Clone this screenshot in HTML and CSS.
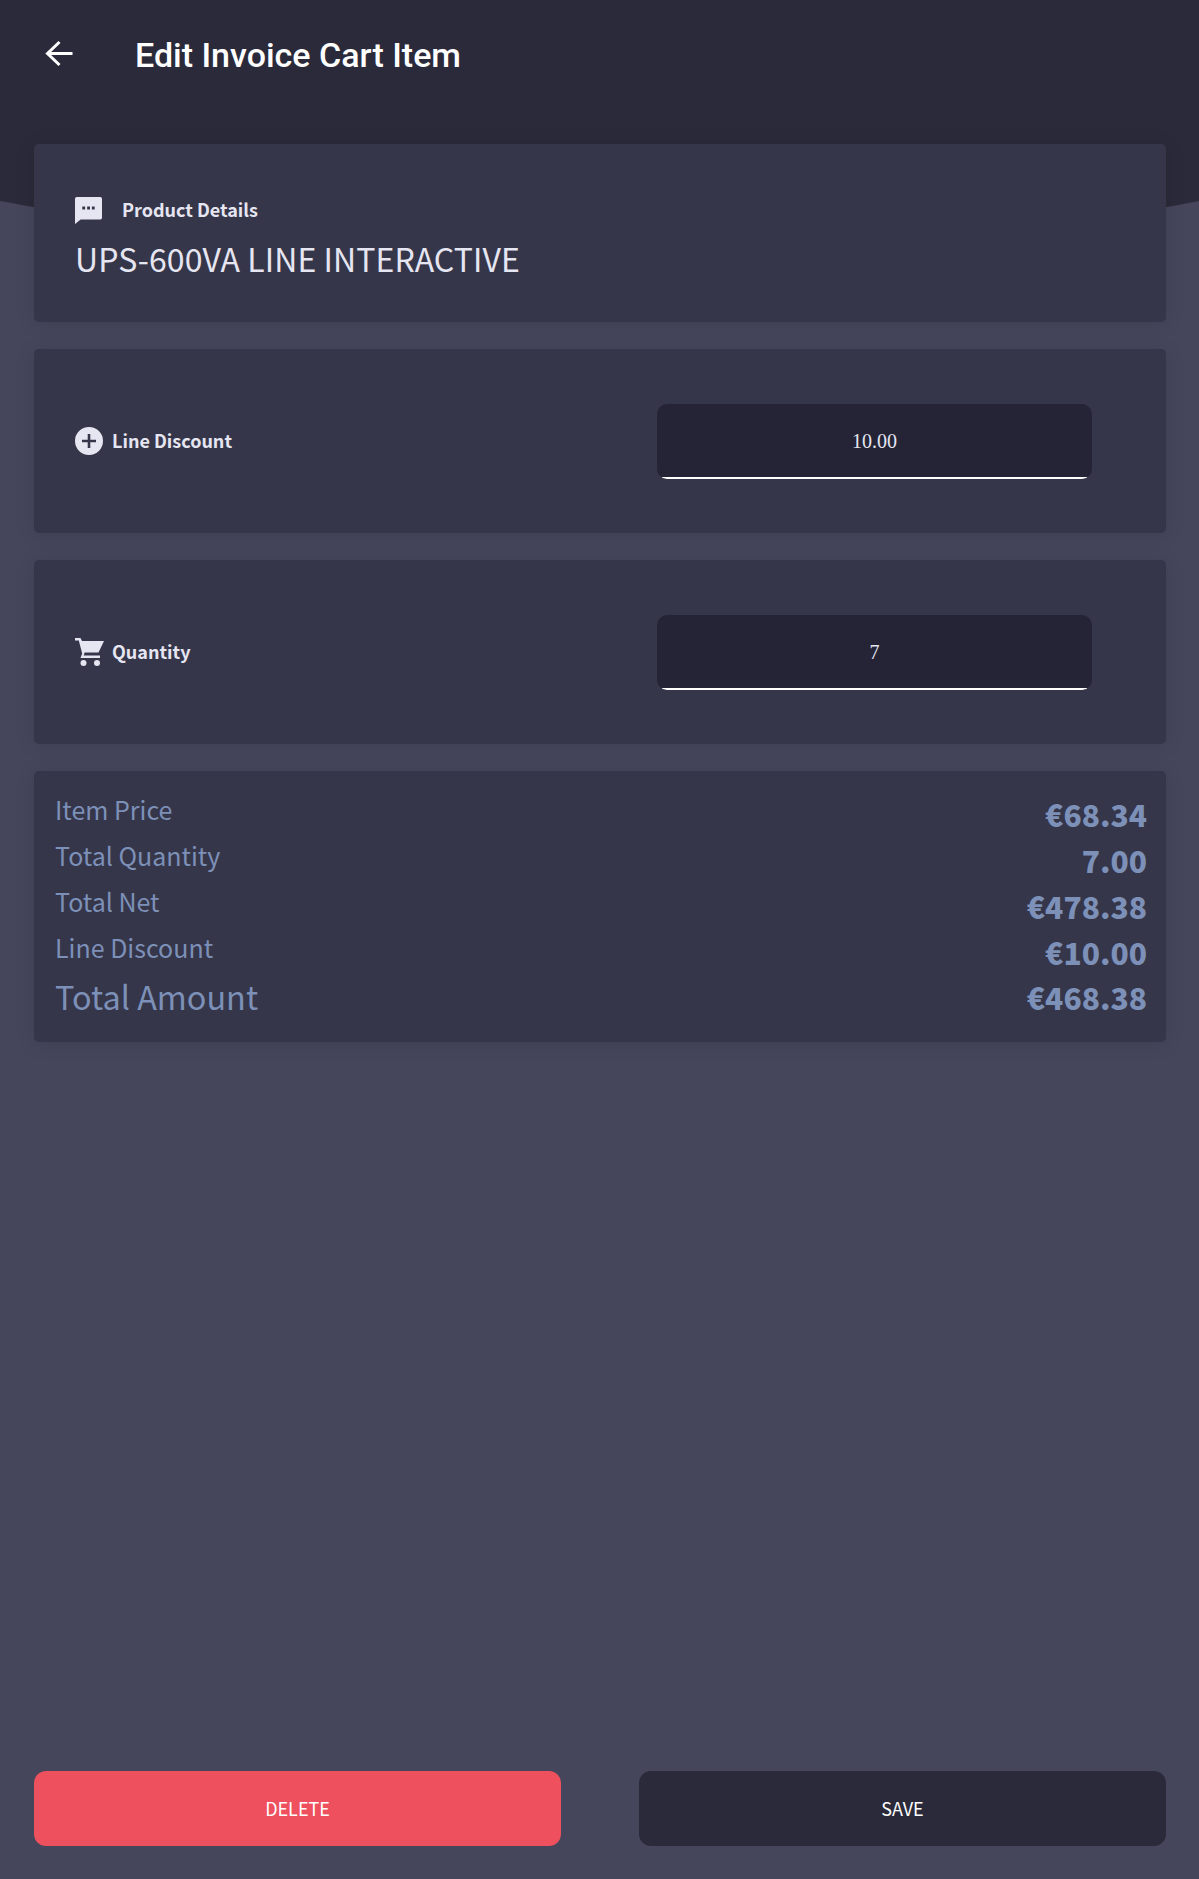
FILE: index.html
```html
<!DOCTYPE html>
<html lang="en">
<head>
    <meta charset="UTF-8">
    <meta name="viewport" content="width=device-width, initial-scale=1.0">
    <title>Edit Invoice Cart Item</title>
    <link rel="stylesheet" href="styles.css">
</head>
<body>
    <div class="page">
        <div class="curve"></div>

        <header class="toolbar">
            <svg class="back-icon" viewBox="0 0 28 28" width="28" height="28">
                <path d="M14.5 2 L2.5 13.5 L14.5 25 M2.5 13.5 H27.5" fill="none" stroke="#fff" stroke-width="3"/>
            </svg>
            <h1>Edit Invoice Cart Item</h1>
        </header>

        <main class="content">
            <section class="card product">
                <div class="product-label">
                    <svg class="icon" viewBox="0 0 24 24" width="27" height="27">
                        <path fill-rule="evenodd" d="M1.5 0 H22.5 A1.5 1.5 0 0 1 24 1.5 V18.5 A1.5 1.5 0 0 1 22.5 20 H5 L0 24 V1.5 A1.5 1.5 0 0 1 1.5 0 Z M6.5 8.5 V11 H9 V8.5 Z M10.8 8.5 V11 H13.3 V8.5 Z M15 8.5 V11 H17.5 V8.5 Z"/>
                    </svg>
                    <span>Product Details</span>
                </div>
                <div class="product-name">UPS-600VA LINE INTERACTIVE</div>
            </section>

            <section class="card field">
                <div class="field-label">
                    <svg class="icon" viewBox="0 0 28 28" width="28" height="28">
                        <path fill-rule="evenodd" d="M14 0 A14 14 0 1 1 14 28 A14 14 0 1 1 14 0 Z M12.7 7 V12.7 H7 V15.3 H12.7 V21 H15.3 V15.3 H21 V12.7 H15.3 V7 Z"/>
                    </svg>
                    <label for="discount">Line Discount</label>
                </div>
                <input class="field-input" id="discount" type="text" value="10.00">
            </section>

            <section class="card field">
                <div class="field-label">
                    <svg class="icon cart-icon" viewBox="0 0 29 28" width="29" height="28">
                        <path d="M0 0 H5.5 L7 3 H29 L23.5 14.5 H9.5 L9.2 16 L8.6 17.5 H25 V20 H5.5 L7.2 15.5 L3.8 2.6 H0 Z"/>
                        <circle cx="8.5" cy="25" r="3"/>
                        <circle cx="22" cy="25" r="3"/>
                    </svg>
                    <label for="quantity">Quantity</label>
                </div>
                <input class="field-input" id="quantity" type="text" value="7">
            </section>

            <section class="card summary">
                <div class="summary-row"><span>Item Price</span><strong>€68.34</strong></div>
                <div class="summary-row"><span>Total Quantity</span><strong>7.00</strong></div>
                <div class="summary-row"><span>Total Net</span><strong>€478.38</strong></div>
                <div class="summary-row"><span>Line Discount</span><strong>€10.00</strong></div>
                <div class="summary-row total"><span>Total Amount</span><strong>€468.38</strong></div>
            </section>
        </main>

        <footer class="actions">
            <button class="btn btn-delete" type="button">DELETE</button>
            <button class="btn btn-save" type="button">SAVE</button>
        </footer>
    </div>
</body>
</html>
```

FILE: styles.css
```css
body {
    margin: 0;
    background-color: #45465b;
    font-family: "Noto Sans CJK SC", "Noto Sans", sans-serif;
    color: #e6e6f2;
}
.page {
    position: relative;
    min-height: 100vh;
    display: flex;
    flex-direction: column;
    overflow: hidden;
}
/* dark curved shape behind the first card */
.curve {
    position: absolute;
    top: 0;
    left: -240px;
    width: 1680px;
    height: 251px;
    background-color: #2b2a3a;
    border-radius: 0 0 840px 840px / 0 0 167px 167px;
}
.toolbar {
    position: relative;
    height: 144px;
    box-sizing: border-box;
    padding: 40px 0 0 45px;
    display: flex;
    align-items: flex-start;
    gap: 63px;
}
.toolbar h1 {
    margin: -5px 0 0 -1px;
    font-family: Roboto, sans-serif;
    font-size: 34px;
    font-weight: 500;
    line-height: 40px;
    color: #fff;
}
.back-icon {
    flex: none;
}
.content {
    position: relative;
    padding: 0 33px 0 34px;
    display: flex;
    flex-direction: column;
    gap: 27px;
}
.card {
    background-color: #36364a;
    border-radius: 5px;
    box-shadow: 0 2px 20px rgba(0,0,0,0.1);
}
.icon {
    flex: none;
    fill: #e6e6f2;
}
.cart-icon {
    margin-right: -1px;
}
.product {
    height: 178px;
    box-sizing: border-box;
    padding: 53px 41px 0 41px;
}
.product-label {
    display: flex;
    align-items: center;
    gap: 20px;
    height: 27px;
    font-size: 18px;
    font-weight: 700;
}
.product-label span {
    margin-top: -4px;
}
.product-name {
    margin-top: 12px;
    font-size: 32px;
    font-weight: 400;
    line-height: 44px;
    letter-spacing: 0.08px;
}
.field {
    height: 184px;
    box-sizing: border-box;
    padding: 0 74px 0 41px;
    display: flex;
    align-items: center;
    justify-content: space-between;
}
.field-label {
    display: flex;
    align-items: center;
    gap: 9px;
    font-size: 18px;
    font-weight: 700;
}
.field-label label {
    margin-top: -3px;
}
.field-input {
    width: 435px;
    height: 75px;
    box-sizing: border-box;
    padding: 1px 0 0;
    border: none;
    border-radius: 10px;
    background: linear-gradient(#fff, #fff) no-repeat center bottom / 425px 2px, #252436;
    color: #e6e6f2;
    font-family: "Liberation Serif", serif;
    font-size: 20px;
    text-align: center;
}
.summary {
    height: 271px;
    box-sizing: border-box;
    padding: 15px 19px 0 21px;
    color: #7c90b8;
}
.summary-row {
    display: flex;
    justify-content: space-between;
    height: 46px;
    font-size: 25px;
    font-weight: 400;
    line-height: 46px;
}
.summary-row strong {
    margin-top: 5px;
    font-size: 30px;
    font-weight: 900;
}
.summary-row.total {
    font-size: 32.4px;
}
.summary-row.total span {
    margin-top: 3px;
}
.summary-row.total strong {
    margin-top: 4px;
}
.actions {
    position: relative;
    margin-top: auto;
    padding: 0 33px 33px 34px;
    display: flex;
    justify-content: space-between;
}
.btn {
    width: 527px;
    height: 75px;
    padding: 0 0 2px;
    border: none;
    border-radius: 12px;
    color: #fff;
    font-family: "Noto Sans CJK SC", "Noto Sans", sans-serif;
    font-size: 18px;
    font-weight: 400;
}
.btn-delete {
    background-color: #ee505e;
}
.btn-save {
    background-color: #2b2a3a;
}
```
